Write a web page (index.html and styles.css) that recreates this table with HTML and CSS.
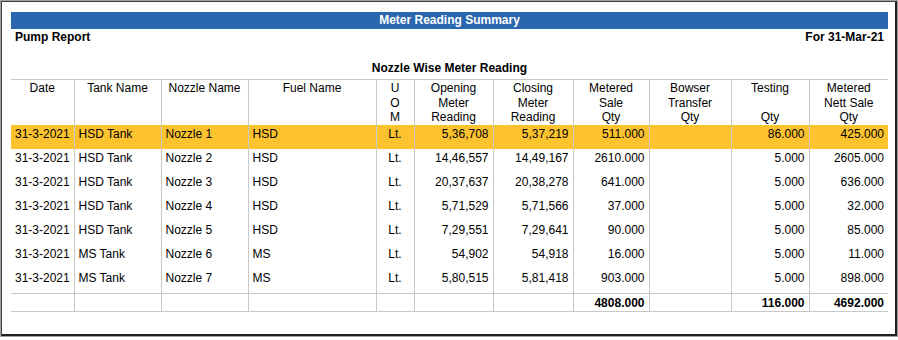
FILE: index.html
```html
<!DOCTYPE html>
<html>
<head>
<meta charset="utf-8">
<link rel="stylesheet" href="styles.css">
</head>
<body>
<div class="frame">
  <div class="banner">Meter Reading Summary</div>
  <div class="report-row">
    <span>Pump Report</span>
    <span>For 31-Mar-21</span>
  </div>
  <div class="section-title">Nozzle Wise Meter Reading</div>
  <table class="grid">
    <colgroup>
      <col class="c63"><col class="c87"><col class="c87"><col class="c128"><col class="c38"><col class="c79"><col class="c80"><col class="c76"><col class="c82"><col class="c78"><col class="c79">
    </colgroup>
    <thead>
      <tr>
        <th>Date</th>
        <th>Tank Name</th>
        <th>Nozzle Name</th>
        <th>Fuel Name</th>
        <th>U<br>O<br>M</th>
        <th>Opening<br>Meter<br>Reading</th>
        <th>Closing<br>Meter<br>Reading</th>
        <th>Metered<br>Sale<br>Qty</th>
        <th>Bowser<br>Transfer<br>Qty</th>
        <th>Testing<br>&nbsp;<br>Qty</th>
        <th>Metered<br>Nett Sale<br>Qty</th>
      </tr>
    </thead>
    <tbody>
      <tr class="hl">
        <td>31-3-2021</td><td>HSD Tank</td><td>Nozzle 1</td><td>HSD</td><td class="ctr">Lt.</td>
        <td class="num">5,36,708</td><td class="num">5,37,219</td><td class="num">511.000</td><td class="num"></td><td class="num">86.000</td><td class="num">425.000</td>
      </tr>
      <tr>
        <td>31-3-2021</td><td>HSD Tank</td><td>Nozzle 2</td><td>HSD</td><td class="ctr">Lt.</td>
        <td class="num">14,46,557</td><td class="num">14,49,167</td><td class="num">2610.000</td><td class="num"></td><td class="num">5.000</td><td class="num">2605.000</td>
      </tr>
      <tr>
        <td>31-3-2021</td><td>HSD Tank</td><td>Nozzle 3</td><td>HSD</td><td class="ctr">Lt.</td>
        <td class="num">20,37,637</td><td class="num">20,38,278</td><td class="num">641.000</td><td class="num"></td><td class="num">5.000</td><td class="num">636.000</td>
      </tr>
      <tr>
        <td>31-3-2021</td><td>HSD Tank</td><td>Nozzle 4</td><td>HSD</td><td class="ctr">Lt.</td>
        <td class="num">5,71,529</td><td class="num">5,71,566</td><td class="num">37.000</td><td class="num"></td><td class="num">5.000</td><td class="num">32.000</td>
      </tr>
      <tr>
        <td>31-3-2021</td><td>HSD Tank</td><td>Nozzle 5</td><td>HSD</td><td class="ctr">Lt.</td>
        <td class="num">7,29,551</td><td class="num">7,29,641</td><td class="num">90.000</td><td class="num"></td><td class="num">5.000</td><td class="num">85.000</td>
      </tr>
      <tr>
        <td>31-3-2021</td><td>MS Tank</td><td>Nozzle 6</td><td>MS</td><td class="ctr">Lt.</td>
        <td class="num">54,902</td><td class="num">54,918</td><td class="num">16.000</td><td class="num"></td><td class="num">5.000</td><td class="num">11.000</td>
      </tr>
      <tr class="last">
        <td>31-3-2021</td><td>MS Tank</td><td>Nozzle 7</td><td>MS</td><td class="ctr">Lt.</td>
        <td class="num">5,80,515</td><td class="num">5,81,418</td><td class="num">903.000</td><td class="num"></td><td class="num">5.000</td><td class="num">898.000</td>
      </tr>
      <tr class="total">
        <td></td><td></td><td></td><td></td><td></td><td></td><td></td>
        <td class="num">4808.000</td><td class="num"></td><td class="num">116.000</td><td class="num">4692.000</td>
      </tr>
    </tbody>
  </table>
</div>
</body>
</html>
```

FILE: styles.css
```css
html, body {
  margin: 0;
  padding: 0;
  background: #ffffff;
}
body {
  font-family: "Liberation Sans", Arial, sans-serif;
  font-size: 12px;
  color: #000;
}
.frame {
  box-sizing: border-box;
  width: 898px;
  height: 337px;
  border: 1px solid #a0a0a0;
  box-shadow: inset 1px 1px 0 #404040, inset -2px -2px 0 #202020;
  padding: 11px 9px 0 10px;
  background: #fff;
}
.banner {
  height: 17px;
  line-height: 17px;
  background: #2b67af;
  color: #fff;
  font-weight: bold;
  text-align: center;
}
.report-row {
  display: flex;
  justify-content: space-between;
  height: 31px;
  padding: 1px 4px 0 4px;
  line-height: 14px;
  font-weight: bold;
}
.section-title {
  text-align: center;
  font-weight: bold;
  line-height: 14px;
  margin-bottom: 4px;
}
.grid {
  width: 877px;
  border-collapse: collapse;
  table-layout: fixed;
  border-top: 1px solid #c8c8c8;
}
.c63 { width: 63px; }
.c87 { width: 87px; }
.c128 { width: 128px; }
.c38 { width: 38px; }
.c79 { width: 79px; }
.c80 { width: 80px; }
.c76 { width: 76px; }
.c82 { width: 82px; }
.c78 { width: 78px; }
.grid th, .grid td {
  border-left: 1px solid #c8c8c8;
  padding: 0 4px;
  white-space: nowrap;
  overflow: hidden;
}
.grid th:first-child, .grid td:first-child {
  border-left: none;
}
.grid th {
  font-weight: normal;
  text-align: center;
  vertical-align: top;
  line-height: 14.5px;
  height: 45px;
  padding-top: 1px;
  box-sizing: border-box;
}
.grid td {
  height: 24px;
  line-height: 14px;
  padding-top: 2px;
  padding-bottom: 8px;
  box-sizing: border-box;
  vertical-align: top;
  text-align: left;
}
.grid td.num {
  text-align: right;
}
.grid td.ctr {
  text-align: center;
}
.grid tr.hl td {
  background: #fdc32f;
}
.grid tr.last td {
  border-bottom: 1px solid #c8c8c8;
}
.grid tr.total td {
  height: 17px;
  padding-bottom: 1px;
  font-weight: bold;
  border-bottom: 1px solid #c8c8c8;
}
```
